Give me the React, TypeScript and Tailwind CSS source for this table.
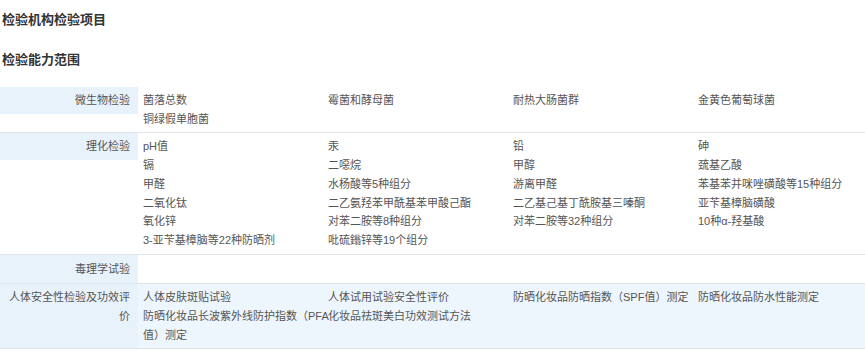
import React from "react";

const font = { fontFamily: '"Liberation Sans", "Noto Sans CJK SC", sans-serif' };

type Row = { label: string; items: React.ReactNode[]; full?: boolean; minH?: boolean };

const rows: Row[] = [
  {
    label: "微生物检验",
    items: ["菌落总数", "霉菌和酵母菌", "耐热大肠菌群", "金黄色葡萄球菌", "铜绿假单胞菌"],
  },
  {
    label: "理化检验",
    items: [
      "pH值", "汞", "铅", "砷",
      "镉", "二噁烷", "甲醇", "巯基乙酸",
      "甲醛", "水杨酸等5种组分", "游离甲醛", "苯基苯并咪唑磺酸等15种组分",
      "二氧化钛", "二乙氨羟苯甲酰基苯甲酸己酯", "二乙基己基丁酰胺基三嗪酮", "亚苄基樟脑磺酸",
      "氧化锌", "对苯二胺等8种组分", "对苯二胺等32种组分", "10种α-羟基酸",
      "3-亚苄基樟脑等22种防晒剂", "吡硫鎓锌等19个组分",
    ],
  },
  { label: "毒理学试验", items: [], minH: true },
  {
    label: "人体安全性检验及功效评价",
    full: true,
    items: [
      "人体皮肤斑贴试验",
      "人体试用试验安全性评价",
      "防晒化妆品防晒指数（SPF值）测定",
      "防晒化妆品防水性能测定",
      <>防晒化妆品长波紫外线防护指数（PFA<br />值）测定</>,
      "化妆品祛斑美白功效测试方法",
    ],
  },
];

export default function App() {
  return (
    <div className="w-[865px] h-[352px] overflow-hidden bg-white" style={font}>
      <div className="pl-[2px] pt-[10px] text-[13px] font-bold leading-[20px] text-[#333]">检验机构检验项目</div>
      <div className="pl-[2px] mt-[20px] text-[13px] font-bold leading-[20px] text-[#333]">检验能力范围</div>
      <div className="mt-[17px] w-[883px] text-[11px] leading-[18.7px] text-[#555]">
        {rows.map((r, i) => (
          <div
            key={i}
            className={
              "flex border-b border-[#dfe5ea] " +
              (r.full ? "bg-[#eef6fd]" : "")
            }
          >
            <div
              className={
                "w-[138px] shrink-0 bg-[#e8f2fb] px-[8px] text-right " +
                (r.minH ? "py-[5px]" : "self-start py-[4px]") +
                (r.full ? " self-stretch" : "")
              }
            >
              {r.label}
            </div>
            <div className="grid grid-cols-[repeat(4,185px)] content-start py-[4px] pl-[5px]">
              {r.items.map((it, j) => (
                <div key={j} className="whitespace-nowrap">
                  {it}
                </div>
              ))}
            </div>
          </div>
        ))}
      </div>
    </div>
  );
}
